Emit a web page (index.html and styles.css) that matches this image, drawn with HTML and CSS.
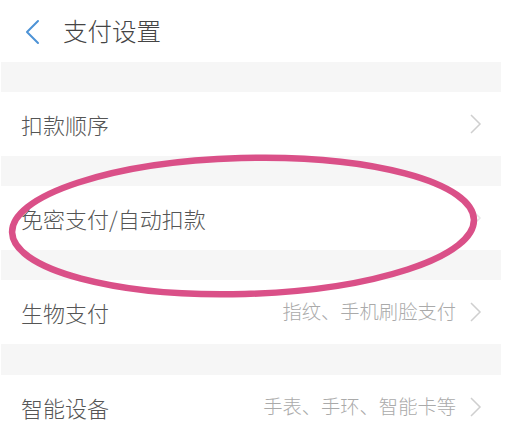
FILE: index.html
```html
<!DOCTYPE html>
<html lang="zh-CN">
<head>
<meta charset="utf-8">
<title>支付设置</title>
<link rel="stylesheet" href="styles.css">
</head>
<body>
<div class="page">
  <header class="header">
    <svg class="back" width="16" height="26" viewBox="0 0 16 26"><path d="M14 2 L3 13 L14 24" fill="none" stroke="#4d93d6" stroke-width="2" stroke-linecap="round" stroke-linejoin="round"/></svg>
    <h1 class="title">支付设置</h1>
  </header>
  <div class="gap"></div>
  <div class="row">
    <span class="label">扣款顺序</span>
    <span class="right"><svg class="chev" width="13" height="22" viewBox="0 0 13 22"><path d="M2 2 L11 11 L2 20" fill="none" stroke="#cfcfcf" stroke-width="1.5"/></svg></span>
  </div>
  <div class="gap"></div>
  <div class="row">
    <span class="label">免密支付/自动扣款</span>
    <span class="right"><svg class="chev" width="13" height="22" viewBox="0 0 13 22"><path d="M2 2 L11 11 L2 20" fill="none" stroke="#e6e6e6" stroke-width="1.5"/></svg></span>
  </div>
  <div class="gap"></div>
  <div class="row">
    <span class="label">生物支付</span>
    <span class="right"><span class="desc">指纹、手机刷脸支付</span><svg class="chev" width="13" height="22" viewBox="0 0 13 22"><path d="M2 2 L11 11 L2 20" fill="none" stroke="#cfcfcf" stroke-width="1.5"/></svg></span>
  </div>
  <div class="gap tall"></div>
  <div class="row">
    <span class="label">智能设备</span>
    <span class="right"><span class="desc">手表、手环、智能卡等</span><svg class="chev" width="13" height="22" viewBox="0 0 13 22"><path d="M2 2 L11 11 L2 20" fill="none" stroke="#cfcfcf" stroke-width="1.5"/></svg></span>
  </div>
  <svg class="mark" width="524" height="431" viewBox="0 0 524 431"><ellipse cx="243" cy="226" rx="231" ry="68" transform="rotate(-1.6 243 226)" fill="none" stroke="#da5088" stroke-width="6.5"/></svg>
</div>
</body>
</html>
```
FILE: styles.css
```css
html, body {
  margin: 0;
  padding: 0;
  background: #fff;
}
body {
  font-family: "Noto Sans CJK SC", "Noto Sans", sans-serif;
  font-weight: 300;
  overflow: hidden;
}
.page {
  position: relative;
  width: 524px;
  height: 431px;
}
.header {
  height: 62px;
  display: flex;
  align-items: center;
  padding-left: 23px;
  width: 500px;
  margin-left: 1px;
}
.back {
  display: block;
  margin-top: 1px;
}
.title {
  margin: 0 0 0 23px;
  font-size: 24.5px;
  font-weight: 300;
  color: #444;
  line-height: 1;
}
.gap {
  height: 30px;
  width: 500px;
  margin-left: 1px;
  background: #f6f6f6;
}
.gap.tall {
  height: 31px;
}
.row {
  height: 64px;
  width: 500px;
  margin-left: 1px;
  display: flex;
  align-items: center;
  justify-content: space-between;
  padding: 0 19px 0 20px;
  box-sizing: border-box;
}
.label {
  font-size: 22px;
  color: #555;
  line-height: 1;
}
.right {
  display: flex;
  align-items: center;
  gap: 13px;
}
.desc {
  font-size: 19.3px;
  color: #aaa;
  line-height: 1;
}
.chev {
  display: block;
}
.mark {
  position: absolute;
  left: 0;
  top: 0;
  pointer-events: none;
}
```
